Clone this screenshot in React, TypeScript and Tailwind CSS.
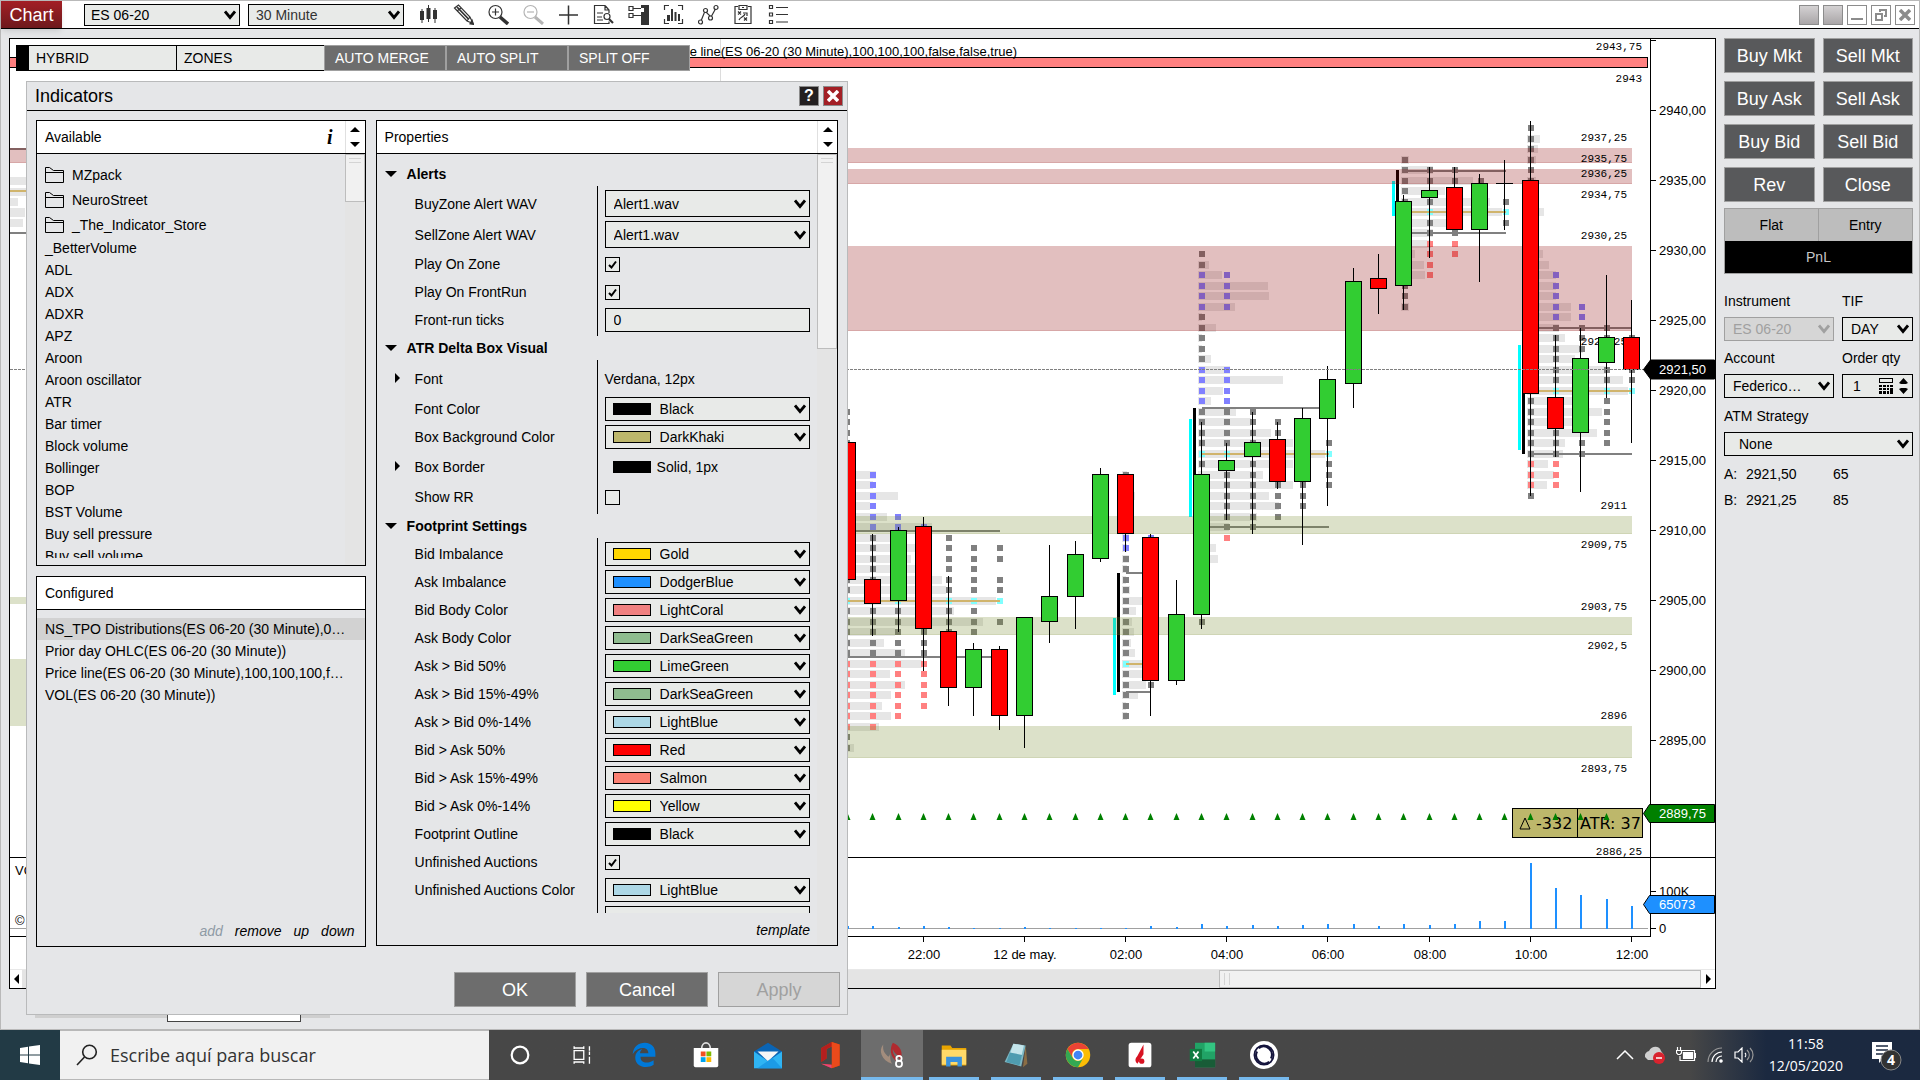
import React from "react";
import clsx from "clsx";

type Candle = { o: number; c: number; h: number; l: number; up: boolean };
type Group = {
  x: number;
  bars: number[][];
  dots: { x: number; color: string; rows: number[] }[];
  lines: { x1: number; x2: number; y: number; color: string }[];
  sides?: { cyan: number[]; black: number[] };
};

const GRAY = "#808080";
const BLUE = "#8080ff";
const RED = "#ff8080";
const CYAN = "#80ffff";
const GOLD = "#d0b46c";

const barX = (i: number) => Math.floor(923.3 + 25.29 * i);
const rowY = (r: number) => Math.floor(412 + 10.5 * r);

// y values in chart space, first candle is 20:30
const candle = (o: number, c: number, h: number, l: number, up: boolean): Candle => ({ o, c, h, l, up });
const candles: Candle[] = [
  candle(442, 580, 442, 580, false),
  candle(579, 604, 534, 636, false),
  candle(530, 601, 527, 632, true),
  candle(526, 629, 517, 671, false),
  candle(631, 688, 576, 706, false),
  candle(649, 688, 643, 716, true),
  candle(649, 716, 646, 730, false),
  candle(617, 716, 617, 748, true),
  candle(596, 622, 545, 643, true),
  candle(554, 597, 541, 629, true),
  candle(474, 559, 468, 562, true),
  candle(474, 534, 474, 552, false),
  candle(537, 681, 534, 716, false),
  candle(614, 681, 580, 685, true),
  candle(474, 615, 422, 629, true),
  candle(460, 471, 443, 520, true),
  candle(442, 457, 412, 534, true),
  candle(439, 482, 422, 489, false),
  candle(418, 482, 408, 545, true),
  candle(379, 419, 366, 506, true),
  candle(281, 384, 268, 408, true),
  candle(278, 289, 254, 314, false),
  candle(201, 286, 195, 310, true),
  candle(190, 198, 167, 258, true),
  candle(187, 230, 167, 230, false),
  candle(183, 230, 174, 282, true),
  candle(183, 184, 160, 230, true),
  candle(180, 394, 121, 496, false),
  candle(397, 429, 335, 457, false),
  candle(358, 433, 328, 492, true),
  candle(337, 363, 275, 398, true),
  candle(337, 370, 300, 443, false),
];

const groups: Group[] = [
  {
    x: 840,
    bars: [
      [6, 876], [7, 873], [8, 898], [9, 870], [10, 887], [11, 932], [12, 907], [13, 915], [14, 911], [15, 915],
      [16, 942], [17, 946], [18, 996], [19, 954], [20, 983], [21, 895], [22, 884], [23, 905], [24, 922], [25, 890],
      [26, 905], [27, 891], [28, 882], [29, 891], [30, 879], [31, 848], [32, 854],
    ],
    dots: [
      { x: 847, color: GRAY, rows: [0, 1, 2, 3, 16, 17, 19, 20, 21, 22, 23, 31, 32] },
      { x: 847, color: RED, rows: [24, 25, 26, 27, 28, 29, 30] },
      { x: 847, color: CYAN, rows: [18] },
      { x: 873, color: BLUE, rows: [6, 7, 8, 9, 10, 11] },
      { x: 873, color: GRAY, rows: [12, 13, 14, 15, 16, 19, 20, 21, 22, 23] },
      { x: 873, color: RED, rows: [24, 25, 26, 27, 28, 29, 30] },
      { x: 898, color: BLUE, rows: [10, 11] },
      { x: 898, color: CYAN, rows: [18] },
      { x: 898, color: GRAY, rows: [19, 20, 21, 22, 23] },
      { x: 898, color: RED, rows: [24, 25, 26, 27, 28, 29] },
      { x: 924, color: BLUE, rows: [11] },
      { x: 924, color: GRAY, rows: [21, 22, 23] },
      { x: 924, color: RED, rows: [24, 25, 26, 27, 28] },
      { x: 949, color: GRAY, rows: [12, 13, 14, 15, 16, 17, 19, 20, 21] },
      { x: 949, color: CYAN, rows: [18] },
      { x: 974, color: GRAY, rows: [13, 14, 15, 16, 17, 19, 20, 21] },
      { x: 974, color: CYAN, rows: [18] },
      { x: 1000, color: GRAY, rows: [13, 14, 16, 17, 20] },
      { x: 1000, color: CYAN, rows: [18] },
    ],
    lines: [
      { x1: 840, x2: 1000, y: 531, color: GRAY },
      { x1: 840, x2: 1000, y: 657, color: GRAY },
      { x1: 840, x2: 1000, y: 601, color: GOLD },
    ],
  },
  {
    x: 1122,
    bars: [
      [6, 1127], [8, 1135], [12, 1129], [13, 1127], [14, 1129], [15, 1127], [16, 1126], [17, 1130], [18, 1145],
      [19, 1136], [20, 1132], [21, 1134], [22, 1131], [23, 1135], [24, 1143], [25, 1143], [26, 1146], [27, 1138],
      [28, 1126], [29, 1127],
    ],
    dots: [
      { x: 1126, color: GRAY, rows: [6, 14, 15, 16, 17, 18, 19, 20, 21, 22, 23, 25, 26, 27, 28, 29] },
      { x: 1126, color: BLUE, rows: [12, 13] },
      { x: 1126, color: CYAN, rows: [24] },
      { x: 1151, color: BLUE, rows: [12] },
      { x: 1151, color: GRAY, rows: [26] },
    ],
    lines: [
      { x1: 1126, x2: 1151, y: 573, color: GRAY },
      { x1: 1126, x2: 1151, y: 692, color: GRAY },
      { x1: 1126, x2: 1151, y: 664, color: GOLD },
    ],
    sides: { cyan: [1113, 618, 695], black: [1117, 573, 692] },
  },
  {
    x: 1198,
    bars: [
      [-14, 1209], [-13, 1222], [-12, 1268], [-11, 1269], [-10, 1235], [-9, 1202], [-8, 1216], [-7, 1202],
      [-6, 1202], [-5, 1211], [-4, 1230], [-3, 1283], [-2, 1223], [-1, 1211], [0, 1236], [1, 1251], [2, 1271],
      [3, 1293], [4, 1325], [5, 1293], [6, 1263], [7, 1293], [8, 1269], [9, 1279], [10, 1257], [11, 1229],
      [13, 1216], [14, 1218],
    ],
    dots: [
      { x: 1202, color: GRAY, rows: [-15, -14, -9, -8, -7, -6, -5, 0, 1, 2, 3, 5, 20] },
      { x: 1202, color: BLUE, rows: [-13, -12, -11, -10, -4, -3, -2, -1] },
      { x: 1202, color: CYAN, rows: [4] },
      { x: 1227, color: BLUE, rows: [-13, -12, -11, -10, -4, -3, -2, -1] },
      { x: 1227, color: GRAY, rows: [0, 1, 2, 3, 6, 7, 8, 9, 10, 11] },
      { x: 1227, color: CYAN, rows: [4] },
      { x: 1227, color: RED, rows: [12] },
      { x: 1253, color: GRAY, rows: [0, 1, 2, 3, 5, 6, 7, 8, 9, 10, 11] },
      { x: 1278, color: GRAY, rows: [1, 2, 7, 8, 9, 10] },
      { x: 1303, color: GRAY, rows: [7, 8, 9] },
      { x: 1329, color: GRAY, rows: [3, 5, 6, 7] },
      { x: 1329, color: CYAN, rows: [4] },
    ],
    lines: [
      { x1: 1202, x2: 1329, y: 408, color: GRAY },
      { x1: 1202, x2: 1329, y: 527, color: GRAY },
      { x1: 1202, x2: 1329, y: 454, color: GOLD },
    ],
    sides: { cyan: [1189, 419, 517], black: [1193, 408, 527] },
  },
  {
    x: 1401,
    bars: [
      [-24, 1409], [-23, 1433], [-22, 1473], [-21, 1445], [-20, 1490], [-19, 1502], [-18, 1448], [-17, 1433],
      [-16, 1431], [-15, 1415], [-14, 1424], [-13, 1425], [-10, 1409],
    ],
    dots: [
      { x: 1405, color: GRAY, rows: [-24, -23, -22, -21, -20, -12, -11, -10] },
      { x: 1430, color: GRAY, rows: [-23, -22, -20, -18, -17] },
      { x: 1430, color: CYAN, rows: [-19] },
      { x: 1430, color: RED, rows: [-16, -15, -14, -13] },
      { x: 1455, color: GRAY, rows: [-23, -22, -17] },
      { x: 1455, color: RED, rows: [-16, -15] },
      { x: 1481, color: GRAY, rows: [-22] },
      { x: 1506, color: GRAY, rows: [-20, -18] },
      { x: 1506, color: CYAN, rows: [-19] },
    ],
    lines: [
      { x1: 1405, x2: 1506, y: 171, color: GRAY },
      { x1: 1405, x2: 1506, y: 233, color: GRAY },
      { x1: 1405, x2: 1506, y: 212, color: GOLD },
    ],
    sides: { cyan: [1392, 181, 216], black: [1396, 170, 233] },
  },
  {
    x: 1527,
    bars: [
      [-26, 1540], [-25, 1538], [-24, 1536], [-22, 1536], [-19, 1544], [-15, 1543], [-14, 1549], [-13, 1556],
      [-12, 1556], [-11, 1556], [-10, 1571], [-9, 1571], [-8, 1559], [-7, 1565], [-6, 1583], [-5, 1575],
      [-4, 1607], [-3, 1623], [-2, 1628], [-1, 1576], [0, 1602], [1, 1581], [2, 1597], [3, 1565], [4, 1563],
      [5, 1548], [6, 1554], [7, 1547],
    ],
    dots: [
      { x: 1531, color: GRAY, rows: [-27, -26, -25, -24, -23, -22, -1, 0, 1, 2, 3, 4, 8] },
      { x: 1531, color: RED, rows: [5, 6, 7] },
      { x: 1556, color: BLUE, rows: [-13, -12, -11, -10, -9] },
      { x: 1556, color: GRAY, rows: [-8, -7, -6, -5, -4, -3, 2, 3, 4] },
      { x: 1556, color: CYAN, rows: [-2] },
      { x: 1556, color: RED, rows: [5, 6, 7] },
      { x: 1582, color: BLUE, rows: [-10, -9] },
      { x: 1582, color: GRAY, rows: [-8, -7, -6, 3, 4] },
      { x: 1607, color: GRAY, rows: [-8, -7, -4, -3, -1, 0, 1, 2, 3] },
      { x: 1607, color: CYAN, rows: [-2] },
      { x: 1632, color: GRAY, rows: [-7, -4, -3] },
      { x: 1632, color: CYAN, rows: [-2] },
    ],
    lines: [
      { x1: 1531, x2: 1632, y: 328, color: GRAY },
      { x1: 1531, x2: 1632, y: 454, color: GRAY },
      { x1: 1531, x2: 1632, y: 391, color: GOLD },
    ],
    sides: { cyan: [1518, 345, 450], black: [1522, 394, 454] },
  },
];

const zones = [
  { x: 10, y: 148, h: 15, color: "#8b0000" },
  { x: 720, y: 169, h: 15, color: "#8b0000" },
  { x: 720, y: 246, h: 85, color: "#8b0000" },
  { x: 720, y: 516, h: 18, color: "#738727" },
  { x: 720, y: 617, h: 18, color: "#738727" },
  { x: 720, y: 726, h: 32, color: "#738727" },
];

const zoneLabels: [string, number, number][] = [
  ["2943,75", 1642, 46],
  ["2943", 1642, 78],
  ["2937,25", 1627, 137],
  ["2935,75", 1627, 158],
  ["2936,25", 1627, 173],
  ["2934,75", 1627, 194],
  ["2930,25", 1627, 235],
  ["2924,25", 1627, 341],
  ["2911", 1627, 505],
  ["2909,75", 1627, 544],
  ["2903,75", 1627, 606],
  ["2902,5", 1627, 645],
  ["2896", 1627, 715],
  ["2893,75", 1627, 768],
  ["2886,25", 1642, 851],
];

const volumes = [
  3, 3, 2, 3, 2, 1, 1, 2, 1, 1, 1, 1, 3, 2, 5, 3, 4, 3, 4, 5, 5, 3, 5, 4, 5, 8, 8, 66, 41, 34, 30, 23,
];

const prices = [2940, 2935, 2930, 2925, 2920, 2915, 2910, 2905, 2900, 2895];
const times = ["22:00", "12 de may.", "02:00", "04:00", "06:00", "08:00", "10:00", "12:00"];

const PriceChart = () => (
  <svg
    viewBox="10 39 1705 930"
    preserveAspectRatio="xMaxYMin slice"
    className="block h-[930px] w-full bg-white"
    fontFamily="Liberation Sans, Arial, sans-serif"
    fontSize="13"
    shapeRendering="crispEdges"
  >
    {/* older session, left of the dialog */}
    <g fill="#e6e6e6">
      <rect x="10" y="177" width="20" height="8" />
      <rect x="10" y="188" width="20" height="8" />
      <rect x="10" y="198" width="8" height="8" />
      <rect x="10" y="208" width="15" height="9" />
      <rect x="10" y="219" width="13" height="8" />
    </g>
    <rect x="10" y="190" width="20" height="2" fill={GOLD} />
    <rect x="10" y="148" width="20" height="2" fill={GRAY} />
    <rect x="10" y="232" width="20" height="2" fill={GRAY} />
    <rect x="720" y="39" width="1" height="60" fill="#dcdcdc" />
    {/* volume profiles */}
    {groups.map((g) => (
      <g key={g.x}>
        {g.bars.map(([r, end]) => (
          <rect key={r} x={g.x} y={rowY(r) - 4} width={end - g.x} height="8" fill="#e6e6e6" />
        ))}
        {g.dots.map((d) =>
          d.rows.map((r) => (
            <rect key={`${d.x}-${r}`} x={d.x - 3} y={rowY(r) - 3} width="6" height="6" fill={d.color} />
          ))
        )}
        {g.lines.map((l) => (
          <rect key={l.y} x={l.x1} y={l.y - 1} width={l.x2 - l.x1} height="2" fill={l.color} />
        ))}
        {g.sides && (
          <>
            <rect x={g.sides.cyan[0]} y={g.sides.cyan[1]} width="3" height={g.sides.cyan[2] - g.sides.cyan[1]} fill="#00ffff" />
            <rect x={g.sides.black[0]} y={g.sides.black[1]} width="3" height={g.sides.black[2] - g.sides.black[1]} fill="#000" />
          </>
        )}
      </g>
    ))}
    {/* supply and demand zones */}
    {zones.map((z) => (
      <g key={z.y} fill={z.color}>
        <rect x={z.x} y={z.y} width={1632 - z.x} height={z.h} fillOpacity="0.25" />
        <rect x={z.x} y={z.y + z.h - 1} width={1632 - z.x} height="1" fillOpacity="0.12" />
      </g>
    ))}
    <rect x="10" y="597" width="20" height="7" fill="#738727" fillOpacity="0.25" />
    <rect x="10" y="659" width="20" height="67" fill="#738727" fillOpacity="0.25" />
    <g fontFamily="Liberation Mono, Courier New, monospace" fontSize="11" textAnchor="end">
      {zoneLabels.map(([text, x, y]) => (
        <text key={text} x={x} y={y + 4}>
          {text}
        </text>
      ))}
    </g>
    {/* price line indicator */}
    <rect x="9.5" y="57.5" width="1638" height="10" fill="#ff8080" stroke="#000" />
    <text x="1017" y="56" textAnchor="end">
      Price line(ES 06-20 (30 Minute),100,100,100,false,false,true)
    </text>
    {/* candles */}
    {candles.map((c, i) => {
      const x = barX(i - 3);
      return (
        <g key={i}>
          <rect x={x} y={c.h} width="1" height={c.l - c.h} fill="#000" />
          {c.c - c.o < 2 ? (
            <rect x={x - 8} y={c.o} width="17" height="1" fill="#000" />
          ) : (
            <rect
              x={x - 7.5}
              y={c.o + 0.5}
              width="16"
              height={c.c - c.o - 1}
              fill={c.up ? "#32cd32" : "#ff0000"}
              stroke="#000"
            />
          )}
        </g>
      );
    })}
    <line x1="10" x2="1644" y1="369.5" y2="369.5" stroke="#808080" strokeDasharray="3 1" />
    {/* delta / ATR box */}
    <rect x="1512.5" y="808.5" width="65" height="29" fill="#bdb76b" stroke="#000" />
    <rect x="1577.5" y="808.5" width="65" height="29" fill="#bdb76b" stroke="#000" />
    <path d="M1520 829l5-11 5 11z" fill="none" stroke="#000" shapeRendering="auto" />
    <g fontFamily="DejaVu Sans, Verdana, sans-serif" fontSize="16">
      <text x="1536" y="829">-332</text>
      <text x="1580" y="829">ATR: 37</text>
    </g>
    {candles.slice(0, 31).map((_, i) => (
      <path key={i} d={`M${barX(i - 3) + 0.5} 813l3 7h-6z`} fill="#008000" shapeRendering="auto" />
    ))}
    {/* volume panel */}
    <rect x="10" y="857" width="1705" height="1" />
    <rect x="10" y="928" width="1638" height="1" fill="#a0a0a0" />
    {volumes.map((v, i) => (
      <rect key={i} x={barX(i - 3)} y={929 - v} width="2" height={v} fill="#1e90ff" />
    ))}
    <text x="15" y="875">VOL(ES 06-20 (30 Minute))</text>
    <text x="15" y="925">© 2020 NinjaTrader, LLC</text>
    {/* axes */}
    <rect x="10" y="936" width="1641" height="1" />
    <rect x="1650" y="39" width="1" height="898" />
    <rect x="1651" y="40" width="5" height="1" />
    {prices.map((p) => {
      const y = Math.round(110 + (2940 - p) * 14.01);
      return (
        <g key={p}>
          <rect x="1651" y={y} width="5" height="1" />
          <text x="1659" y={y + 5}>{`${p},00`}</text>
        </g>
      );
    })}
    <rect x="1651" y="891" width="5" height="1" />
    <text x="1659" y="896">100K</text>
    <rect x="1651" y="928" width="5" height="1" />
    <text x="1659" y="933">0</text>
    {times.map((t, i) => (
      <g key={t}>
        <rect x={barX(i * 4)} y="937" width="1" height="5" />
        <text x={barX(i * 4) + 1} y="959" textAnchor="middle">
          {t}
        </text>
      </g>
    ))}
    <g stroke="#000" shapeRendering="auto">
      <path d="M1643.5 369.5l7-9.5h64v19h-64z" fill="#000" />
      <path d="M1643.5 813.5l6-9h65v18h-65z" fill="#008000" />
      <path d="M1643.5 904.5l6-9h65v18h-65z" fill="#1e90ff" />
    </g>
    <g fill="#fff">
      <text x="1659" y="374">2921,50</text>
      <text x="1659" y="818">2889,75</text>
      <text x="1659" y="909">65073</text>
    </g>
  </svg>
);

/* ---------- form pieces ---------- */

const Chevron = ({ className = "" }: { className?: string }) => (
  <svg
    viewBox="0 0 12 10"
    className={clsx("pointer-events-none absolute top-1/2 h-[10px] w-3 -translate-y-1/2", className)}
    fill="none"
    stroke="currentColor"
    strokeWidth="2.8"
  >
    <path d="M1 1.5l5 6 5-6" />
  </svg>
);

type SelectProps = {
  id?: string;
  label?: string;
  value: string;
  swatch?: string;
  disabled?: boolean;
  className?: string;
  selectClass?: string;
};

const Select = ({ id, label, value, swatch, disabled, className, selectClass = "pl-2" }: SelectProps) => (
  <div className={clsx("relative", className, disabled ? "text-[#a0a0a0]" : "text-black")}>
    <select
      id={id}
      aria-label={label}
      disabled={disabled}
      className={clsx(
        "block h-full w-full appearance-none border pr-5 text-sm",
        disabled ? "border-[#a0a0a0] bg-[#d6d6d6]" : "border-black bg-[#e8eae8]",
        swatch ? "pl-[54px]" : selectClass
      )}
    >
      <option>{value}</option>
    </select>
    {swatch && (
      <span className={clsx("pointer-events-none absolute top-1.5 left-2 h-3 w-[38px] border border-black", swatch)} />
    )}
    <Chevron className="right-1" />
  </div>
);

const Checkbox = ({ id, checked }: { id: string; checked?: boolean }) => (
  <span className="relative flex h-[15px] w-[15px]">
    <input
      id={id}
      type="checkbox"
      defaultChecked={checked}
      className="peer h-[15px] w-[15px] appearance-none border border-black bg-[#e8eae8]"
    />
    <svg
      viewBox="0 0 15 15"
      className="pointer-events-none absolute inset-0 hidden peer-checked:block"
      fill="none"
      stroke="#000"
      strokeWidth="2"
    >
      <path d="M4 8l2.500 2.500L11 4.500" />
    </svg>
  </span>
);

const SortArrows = () => (
  <span className="flex w-5 flex-col items-center justify-between border-l border-[#e0e0e0] py-1.5">
    <svg viewBox="0 0 10 5" className="h-[5px] w-[10px]">
      <path d="M0 5l5-5 5 5z" />
    </svg>
    <svg viewBox="0 0 10 5" className="h-[5px] w-[10px]">
      <path d="M0 0l5 5 5-5z" />
    </svg>
  </span>
);

const FolderIcon = () => (
  <svg viewBox="0 0 19 16" className="h-4 w-[19px]" fill="none" stroke="#000">
    <path d="M.5 15.500V.5h4l4 3h10v12zM.5 5.500h18" />
  </svg>
);

type Row = {
  label: string;
  kind: "select" | "color" | "check" | "input" | "text" | "border";
  value?: string;
  swatch?: string;
  checked?: boolean;
  h?: string;
};

const alertRows: Row[] = [
  { label: "BuyZone Alert WAV", kind: "select", value: "Alert1.wav", h: "h-[31px]" },
  { label: "SellZone Alert WAV", kind: "select", value: "Alert1.wav", h: "h-[31px]" },
  { label: "Play On Zone", kind: "check", checked: true },
  { label: "Play On FrontRun", kind: "check", checked: true },
  { label: "Front-run ticks", kind: "input", value: "0" },
];

const boxRows: Row[] = [
  { label: "Font", kind: "text", value: "Verdana, 12px", h: "h-8" },
  { label: "Font Color", kind: "color", value: "Black", swatch: "bg-black" },
  { label: "Box Background Color", kind: "color", value: "DarkKhaki", swatch: "bg-[#bdb76b]" },
  { label: "Box Border", kind: "border", value: "Solid, 1px", h: "h-8" },
  { label: "Show RR", kind: "check" },
];

const footprintRows: Row[] = [
  { label: "Bid Imbalance", kind: "color", value: "Gold", swatch: "bg-[#ffd700]" },
  { label: "Ask Imbalance", kind: "color", value: "DodgerBlue", swatch: "bg-[#1e90ff]" },
  { label: "Bid Body Color", kind: "color", value: "LightCoral", swatch: "bg-[#f08080]" },
  { label: "Ask Body Color", kind: "color", value: "DarkSeaGreen", swatch: "bg-[#8fbc8f]" },
  { label: "Ask > Bid 50%", kind: "color", value: "LimeGreen", swatch: "bg-[#32cd32]" },
  { label: "Ask > Bid 15%-49%", kind: "color", value: "DarkSeaGreen", swatch: "bg-[#8fbc8f]" },
  { label: "Ask > Bid 0%-14%", kind: "color", value: "LightBlue", swatch: "bg-[#add8e6]" },
  { label: "Bid > Ask 50%", kind: "color", value: "Red", swatch: "bg-[#ff0000]" },
  { label: "Bid > Ask 15%-49%", kind: "color", value: "Salmon", swatch: "bg-[#fa8072]" },
  { label: "Bid > Ask 0%-14%", kind: "color", value: "Yellow", swatch: "bg-[#ffff00]" },
  { label: "Footprint Outline", kind: "color", value: "Black", swatch: "bg-black" },
  { label: "Unfinished Auctions", kind: "check", checked: true },
  { label: "Unfinished Auctions Color", kind: "color", value: "LightBlue", swatch: "bg-[#add8e6]" },
  { label: "", kind: "input", value: "" },
];

const PropertyRow = ({ row, id }: { row: Row; id: string }) => {
  const expandable = row.kind === "text" || row.kind === "border";
  return (
    <div className={clsx("flex items-center", row.h ?? "h-7")}>
      <div className="relative w-[220px] pl-[38px]">
        {expandable && (
          <svg viewBox="0 0 5 10" className="absolute top-1 left-[18px] h-[10px] w-[5px]">
            <path d="M0 0l5 5-5 5z" />
          </svg>
        )}
        {expandable ? <span>{row.label}</span> : <label htmlFor={id}>{row.label}</label>}
      </div>
      <div className="ml-2 flex w-[205px] items-center">
        {row.kind === "select" && <Select id={id} value={row.value!} className="h-[27px] w-full" />}
        {row.kind === "color" && <Select id={id} value={row.value!} swatch={row.swatch} className="h-6 w-full" />}
        {row.kind === "check" && <Checkbox id={id} checked={row.checked} />}
        {row.kind === "input" && (
          <input
            id={id}
            type="text"
            defaultValue={row.value}
            className="h-6 w-full border border-black bg-[#e8eae8] px-2 text-sm"
          />
        )}
        {row.kind === "text" && <span>{row.value}</span>}
        {row.kind === "border" && (
          <>
            <span className="ml-2 h-3 w-[38px] bg-black" />
            <span className="ml-1.5">{row.value}</span>
          </>
        )}
      </div>
    </div>
  );
};

const Section = ({ title, rows, className, first }: { title: string; rows: Row[]; className?: string; first?: boolean }) => (
  <>
    <div className={clsx("flex shrink-0 items-center", first ? "h-8 pt-2" : "h-6")}>
      <svg viewBox="0 0 12 6" className="ml-2 h-1.5 w-3">
        <path d="M0 0l6 6 6-6z" />
      </svg>
      <h3 className="ml-2.5 font-bold">{title}</h3>
    </div>
    <div className={clsx("relative shrink-0", className)}>
      <span className="absolute inset-y-0 left-[220px] w-px bg-black" />
      {rows.map((row, i) => (
        <PropertyRow key={i} row={row} id={`${title}-${i}`.replace(/ /g, "-")} />
      ))}
    </div>
  </>
);

/* ---------- dialog ---------- */

const folders = ["MZpack", "NeuroStreet", "_The_Indicator_Store"];
const available = [
  "_BetterVolume",
  "ADL",
  "ADX",
  "ADXR",
  "APZ",
  "Aroon",
  "Aroon oscillator",
  "ATR",
  "Bar timer",
  "Block volume",
  "Bollinger",
  "BOP",
  "BST Volume",
  "Buy sell pressure",
  "Buy sell volume",
];
const configured = [
  "NS_TPO Distributions(ES 06-20 (30 Minute),0…",
  "Prior day OHLC(ES 06-20 (30 Minute))",
  "Price line(ES 06-20 (30 Minute),100,100,100,f…",
  "VOL(ES 06-20 (30 Minute))",
];

const ScrollBar = ({ thumb }: { thumb: string }) => (
  <div className="w-5 shrink-0 bg-[#e4e4e4]">
    <div className={clsx("flex flex-col gap-[3px] border border-[#bdbdbd] bg-[#f1f1f1] px-[3px] pt-[3px]", thumb)}>
      <span className="h-px bg-[#d4d4d4]" />
      <span className="h-px bg-[#d4d4d4]" />
    </div>
  </div>
);

const IndicatorsDialog = () => (
  <section
    role="dialog"
    aria-label="Indicators"
    className="absolute top-[81px] left-[25px] z-10 w-[822px] border border-[#b9babb] bg-[#e5e6e8] text-sm text-black"
  >
    <header className="flex h-[29px] items-center border-b border-black pr-1 pl-2">
      <h2 className="flex-1 text-lg">Indicators</h2>
      <button className="h-5 w-5 border border-[#8c8c8c] bg-[#231f20] text-base leading-4 font-bold text-white">?</button>
      <button aria-label="Close dialog" className="ml-1 flex h-5 w-5 items-center justify-center border border-[#8c8c8c] bg-[#a31f25]">
        <svg viewBox="0 0 12 12" className="h-3 w-3" stroke="#fff" strokeWidth="3.500">
          <path d="M1 1l10 10M11 1L1 11" />
        </svg>
      </button>
    </header>
    <div className="flex gap-[10px] px-[9px] pt-[9px]">
      <div className="flex w-[330px] flex-col gap-[10px]">
        <div className="h-[446px] border border-black">
          <div className="flex h-[33px] border-b border-black bg-white">
            <h3 className="flex-1 self-center pl-2">Available</h3>
            <button aria-label="Info" className="pr-3 font-['Liberation_Serif',serif] text-xl leading-7 font-bold italic">
              i
            </button>
            <SortArrows />
          </div>
          <div className="flex h-[411px]">
            <ul className="h-[404px] flex-1 overflow-hidden pt-2 pl-2">
              {folders.map((name) => (
                <li key={name} className="flex h-[25px] items-center gap-2">
                  <FolderIcon />
                  {name}
                </li>
              ))}
              {available.map((name) => (
                <li key={name} className="h-[22px] leading-[22px]">
                  {name}
                </li>
              ))}
            </ul>
            <ScrollBar thumb="h-12" />
          </div>
        </div>
        <div className="flex h-[371px] flex-col border border-black">
          <h3 className="flex h-[33px] items-center border-b border-black bg-white pl-2">Configured</h3>
          <ul className="flex-1 pt-2">
            {configured.map((name, i) => (
              <li key={name} className={clsx("h-[22px] px-2 leading-[22px] whitespace-nowrap", i === 0 && "bg-[#d2d2d2]")}>
                {name}
              </li>
            ))}
          </ul>
          <div className="flex h-[30px] items-center justify-end gap-3 pr-[10px] italic">
            <button className="text-[#8e9aa5]" disabled>
              add
            </button>
            <button>remove</button>
            <button>up</button>
            <button>down</button>
          </div>
        </div>
      </div>
      <div className="flex h-[826px] w-[463px] flex-col border border-black">
        <div className="flex h-[33px] shrink-0 border-b border-black bg-white">
          <h3 className="flex-1 self-center pl-2">Properties</h3>
          <SortArrows />
        </div>
        <div className="flex min-h-0 flex-1">
          <div className="flex flex-1 flex-col">
            <div className="flex h-[759px] flex-col overflow-hidden">
              <Section title="Alerts" rows={alertRows} className="py-0.5" first />
              <Section title="ATR Delta Box Visual" rows={boxRows} className="py-[3px]" />
              <Section title="Footprint Settings" rows={footprintRows} className="py-0.5" />
            </div>
            <button className="mt-[7px] mr-[7px] self-end italic">template</button>
          </div>
          <ScrollBar thumb="h-[195px]" />
        </div>
      </div>
    </div>
    <footer className="flex justify-end gap-[10px] px-[7px] pt-[25px] pb-[7px]">
      <button className="h-[35px] w-[122px] border border-[#a0a0a0] bg-[#6d6d6d] text-lg text-white">OK</button>
      <button className="h-[35px] w-[122px] border border-[#a0a0a0] bg-[#6d6d6d] text-lg text-white">Cancel</button>
      <button disabled className="h-[35px] w-[122px] border border-[#a0a0a0] bg-[#d6d6d6] text-lg text-[#a0a0a0]">
        Apply
      </button>
    </footer>
  </section>
);

/* ---------- toolbar ---------- */

const tools: { name: string; icon: React.ReactNode }[] = [
  {
    name: "Chart style",
    icon: (
      <path d="M2 7h4v9H2zM8.500 4h4v11h-4zM15 6h4v9h-4zM3.500 5h1v14h-1zM10 1h1v17h-1zM16.500 4h1v15h-1z" fill="#333" stroke="none" />
    ),
  },
  {
    name: "Drawing tools",
    icon: (
      <>
        <path d="M1.500 4l4-3L17 13l3 6.500-6-2.500zM14 17l3-4M4 7l4-3" />
        <path d="M4 3l11.500 12M17.500 19.500l2.500.500-1-3z" strokeWidth="1.800" />
      </>
    ),
  },
  {
    name: "Zoom in",
    icon: (
      <>
        <circle cx="7.500" cy="8" r="6.500" />
        <path d="M7.500 4.500v7M4 8h7" />
        <path d="M12 13l8 7" strokeWidth="3.500" />
      </>
    ),
  },
  {
    name: "Zoom out",
    icon: (
      <g stroke="#b4b4b4">
        <circle cx="7.500" cy="8" r="6.500" />
        <path d="M4 8h7" />
        <path d="M12 13l8 7" strokeWidth="3" />
      </g>
    ),
  },
  { name: "Crosshair", icon: <path d="M10.500 1.500v19M1 11h19" strokeWidth="1.500" /> },
  {
    name: "Data box",
    icon: (
      <>
        <path d="M12 1.500H1.500v18H16v-2M12 1.500L16 6v3M12 1.500V6h4M4 9h6M4 13h5M4 16h6" />
        <circle cx="14" cy="12.500" r="3" />
        <path d="M16 15l4 4" strokeWidth="2.200" />
      </>
    ),
  },
  {
    name: "Chart trader",
    icon: (
      <>
        <path d="M1 2.500h4v4H1zM1 9.500h4v4H1zM5 4.500h8M5 11.500h8" />
        <path d="M13 1h8v20h-8V8h3V4h-3z" fill="#333" stroke="none" />
      </>
    ),
  },
  {
    name: "Data series",
    icon: (
      <>
        <path d="M6 1.500H1.500V6M15 1.500h4.500V6M6 19.500H1.500V15M15 19.500h4.500V15" />
        <path d="M4 11h3v6H4zM8 5h2v12H8zM11.500 8h2v9h-2zM15 10h2v7h-2z" fill="#333" stroke="none" />
      </>
    ),
  },
  {
    name: "Indicators",
    icon: (
      <>
        <path d="M3 17L7 7l6 6 5-9" />
        <g fill="#fff">
          <circle cx="2.500" cy="18" r="2" />
          <circle cx="7.500" cy="6.500" r="2" />
          <circle cx="12.500" cy="14" r="2" />
          <circle cx="18" cy="3.500" r="2" />
        </g>
      </>
    ),
  },
  {
    name: "Strategies",
    icon: (
      <>
        <path d="M5 2.500H2v17h16v-17h-3M6 1.500h8v4H6zM9 3.500h2" />
        <path d="M5 7.500l3 3M8 7.500l-3 3M11 13.500l3 3M14 13.500l-3 3M6 16c1-3 5-3 6-6M10 9h4v3" />
      </>
    ),
  },
  {
    name: "Properties",
    icon: <path d="M1.500 1.500h3v3h-3zM1.500 9h3v3h-3zM1.500 16.500h3v3h-3zM8 3.500h12M8 10.500h12M8 18h12" />,
  },
];

const TitleBar = () => (
  <header className="flex h-[29px] items-center border-t border-b border-t-[#b9b9b9] border-b-black bg-white">
    <h1 className="flex h-full w-[61px] items-center justify-center bg-linear-to-b from-[#a31f25] to-[#6e191c] text-lg text-white shadow-md">
      Chart
    </h1>
    <Select label="Instrument selector" value="ES 06-20" className="ml-[22px] h-[22px] w-[156px]" selectClass="pl-1.5" />
    <Select label="Interval" value="30 Minute" className="ml-2 h-[22px] w-[156px] [&>select]:text-[#333]" selectClass="pl-[7px]" />
    <div className="ml-[7px] flex flex-1">
      {tools.map((t) => (
        <button key={t.name} aria-label={t.name} className="flex h-6 w-[35px] items-center justify-center">
          <svg viewBox="0 0 21 21" className="h-[21px] w-[21px]" fill="none" stroke="#333" strokeWidth="1.200">
            {t.icon}
          </svg>
        </button>
      ))}
    </div>
    <div className="flex gap-1 pr-1">
      <button aria-label="Link instrument" className="h-5 w-5 border border-[#8c8c8c] bg-linear-to-b from-[#d4d2d3] to-[#aaa6a8]" />
      <button aria-label="Link interval" className="h-5 w-5 border border-[#8c8c8c] bg-linear-to-b from-[#d4d2d3] to-[#aaa6a8]" />
      <button aria-label="Minimize" className="flex h-5 w-5 items-end justify-center border border-[#8c8c8c] pb-1">
        <span className="h-0.5 w-3 bg-[#8c8c8c]" />
      </button>
      <button aria-label="Restore" className="flex h-5 w-5 items-center justify-center border border-[#8c8c8c]">
        <svg viewBox="0 0 12 12" className="h-3 w-3" fill="none" stroke="#8c8c8c" strokeWidth="2">
          <path d="M5 3V1h6v6H9M1 5h6v6H1z" />
        </svg>
      </button>
      <button aria-label="Close" className="flex h-5 w-5 items-center justify-center border border-[#8c8c8c]">
        <svg viewBox="0 0 12 12" className="h-3 w-3" stroke="#8c8c8c" strokeWidth="3.500">
          <path d="M1 1l10 10M11 1L1 11" />
        </svg>
      </button>
    </div>
  </header>
);

/* ---------- order entry ---------- */

const orderButtons = ["Buy Mkt", "Sell Mkt", "Buy Ask", "Sell Ask", "Buy Bid", "Sell Bid", "Rev", "Close"];

const OrderPanel = () => (
  <aside className="w-[189px] shrink-0 text-sm text-black">
    <div className="grid grid-cols-2 gap-2">
      {orderButtons.map((b) => (
        <button key={b} className="h-[35px] border border-[#a0a0a0] bg-[#58595b] text-lg text-white">
          {b}
        </button>
      ))}
    </div>
    <div className="mt-[6px] grid grid-cols-2 border border-[#a0a0a0] bg-[#bdbdbd] text-center leading-8">
      <span className="border-r border-[#a0a0a0]">Flat</span>
      <span>Entry</span>
      <span className="col-span-2 bg-black text-[#c8c8c8]">PnL</span>
    </div>
    <div className="mt-[17px] grid grid-cols-[110px_1fr] gap-x-2">
      <label htmlFor="instrument" className="h-[26px] leading-5">
        Instrument
      </label>
      <label htmlFor="tif" className="leading-5">
        TIF
      </label>
      <Select id="instrument" value="ES 06-20" disabled className="h-6" />
      <Select id="tif" value="DAY" className="h-6" />
      <label htmlFor="account" className="mt-[7px] h-[26px] leading-5">
        Account
      </label>
      <label htmlFor="qty" className="mt-[7px] leading-5">
        Order qty
      </label>
      <Select id="account" value="Federico…" className="h-6" />
      <div className="flex h-6 items-center border border-black bg-[#e8eae8] pr-1 pl-2.5">
        <input id="qty" type="text" defaultValue="1" className="w-[26px] bg-transparent text-sm" />
        <svg viewBox="0 0 14 16" className="h-4 w-3.5">
          <path d="M0 0h14v5H0zM1 1v3h12V1z" fillRule="evenodd" />
          <path d="M0 7h3v2H0zM4 7h3v2H4zM8 7h2v2H8zM11 7h3v2h-3zM0 10h3v2H0zM4 10h3v2H4zM8 10h2v2H8zM11 10h3v6h-3zM0 13h3v3H0zM4 13h3v3H4zM8 13h2v3H8z" />
        </svg>
        <svg viewBox="0 0 9 16" className="ml-1.5 h-4 w-[9px]">
          <path d="M0 5l4.500-5L9 5l-2 1H2zM0 11l4.500 5L9 11l-2-1H2z" />
        </svg>
      </div>
    </div>
    <label htmlFor="atm" className="mt-2 mb-[6px] block leading-5">
      ATM Strategy
    </label>
    <Select id="atm" value="None" className="h-6" selectClass="pl-[14px]" />
    <dl className="mt-[5px] grid grid-cols-[22px_87px_1fr] leading-[26px]">
      <dt>A:</dt>
      <dd>2921,50</dd>
      <dd>65</dd>
      <dt>B:</dt>
      <dd>2921,25</dd>
      <dd>85</dd>
    </dl>
  </aside>
);

/* ---------- taskbar ---------- */

const apps: { name: string; open?: boolean; active?: boolean; icon: React.ReactNode }[] = [
  { name: "Cortana", icon: <circle cx="16" cy="16" r="9.500" fill="none" stroke="#fff" strokeWidth="2.500" /> },
  {
    name: "Task view",
    icon: (
      <path d="M7 11h11v10H7zM7 9V6M18 9V6M7 8h11M7 26v-3M18 26v-3M7 24h11M24.500 6v5M24.500 18v8M24.500 12v4" fill="none" stroke="#fff" strokeWidth="1.500" />
    ),
  },
  {
    name: "Edge",
    icon: (
      <path
        d="M3 15C4 6 10 2 17 2c8 0 12 6 12 12v4H12c0 8 9 8 15 4v5c-7 5-21 3-21-8 0-6 4-9 8-10-2 2-2.500 3-2.500 5H21c0-8-12-8-18 1z"
        fill="#0078d7"
      />
    ),
  },
  {
    name: "Store",
    icon: (
      <>
        <path d="M11 9c0-9 10-9 10 0" fill="none" stroke="#ddd" strokeWidth="2" />
        <path d="M2 8h28v20a2 2 0 01-2 2H4a2 2 0 01-2-2z" fill="#fff" />
        <path d="M10 12h5.500v5.500H10z" fill="#f25022" />
        <path d="M16.500 12H22v5.500h-5.500z" fill="#7fba00" />
        <path d="M10 18.500h5.500V24H10z" fill="#00a4ef" />
        <path d="M16.500 18.500H22V24h-5.500z" fill="#ffb900" />
      </>
    ),
  },
  {
    name: "Mail",
    icon: (
      <>
        <path d="M0 12L16 2l16 10v19H0z" fill="#0a64b4" />
        <path d="M0 12l16 11 16-11v19H0z" fill="#2fb4f3" />
        <path d="M4 12h24L16 23z" fill="#f6f6f6" />
        <path d="M32 31H4l17-12z" fill="#1c9be6" />
      </>
    ),
  },
  {
    name: "Office",
    icon: (
      <>
        <path d="M6 8L18 1l9 3v24l-9 3L6 26l13 1V6l-7 3v11l-6 4z" fill="#d83b01" />
        <path d="M6 8L18 1v5l-6 3v11l-6 4z" fill="#b31f1f" />
        <path d="M6 26l12 1v4z" fill="#e8467c" />
        <path d="M18 1l9 3v24l-9 3z" fill="#eb4a1b" />
      </>
    ),
  },
  {
    name: "NinjaTrader",
    open: true,
    active: true,
    icon: (
      <>
        <path d="M6 4C0 11 4 22 16 26 12 20 16 12 12 8c3 4 2 8 0 10C8 15 5 11 6 4z" fill="#a38d7d" />
        <path d="M17 2c8 3 13 12 8 20C24 16 18 14 17 9c-1 6 4 8 4 14-7-5-8-14-4-21z" fill="#b02a2f" />
        <circle cx="24" cy="20" r="3" fill="none" stroke="#fff" strokeWidth="2" />
        <circle cx="24" cy="26" r="3.500" fill="none" stroke="#fff" strokeWidth="2" />
      </>
    ),
  },
  {
    name: "Explorer",
    open: true,
    icon: (
      <>
        <path d="M2 5h10l2 3h16v20H2z" fill="#e8a400" />
        <path d="M2 10h28v17H2z" fill="#ffd969" />
        <path d="M7 18h18v11h-5v-5h-8v5H7z" fill="#3a92dd" />
      </>
    ),
  },
  {
    name: "Notepad",
    open: true,
    icon: (
      <>
        <path d="M27 5l2 21-5 4z" fill="#8a6d45" />
        <path d="M13 3l14 2-5 24-19-5z" fill="#7db8c4" />
        <path d="M13 3l12 2-5 22-14-4z" fill="#c4e4ea" />
        <path d="M9 13l14 3-3 12-15-4z" fill="#4f9cb0" />
      </>
    ),
  },
  {
    name: "Chrome",
    open: true,
    icon: (
      <>
        <circle cx="16" cy="16" r="14" fill="#fbbc05" />
        <path d="M3.900 9A14 14 0 0128.100 9H16a7 7 0 00-6 10.500z" fill="#ea4335" />
        <path d="M3.900 9A14 14 0 0016 30l6-10.500a7 7 0 01-12 0z" fill="#34a853" />
        <circle cx="16" cy="16" r="6.500" fill="#fff" />
        <circle cx="16" cy="16" r="5" fill="#4285f4" />
      </>
    ),
  },
  {
    name: "Brokers",
    open: true,
    icon: (
      <>
        <rect x="3" y="2" width="26" height="28" rx="3" fill="#fff" />
        <path d="M20 4v11l-7 11c-3-3-3-6 0-9z" fill="#d81222" />
        <circle cx="18" cy="23" r="3" fill="#d81222" />
      </>
    ),
  },
  {
    name: "Excel",
    open: true,
    icon: (
      <>
        <path d="M8 2h23v28H8z" fill="#21a366" />
        <path d="M19 2h12v10H19z" fill="#33c481" />
        <path d="M8 21h23v9H8z" fill="#185c37" />
        <path d="M2 9h14v14H2z" fill="#107c41" />
        <path d="M6 12l6 8M12 12l-6 8" stroke="#fff" strokeWidth="2" />
      </>
    ),
  },
  {
    name: "Browser",
    open: true,
    icon: (
      <>
        <circle cx="16" cy="16" r="16" fill="#fff" />
        <circle cx="16" cy="16" r="11" fill="none" stroke="#14143c" strokeWidth="2" />
        <path d="M8 12a9.500 9.500 0 0014 12M24 20A9.500 9.500 0 0010 8" fill="none" stroke="#14143c" strokeWidth="2.500" />
      </>
    ),
  },
];

const Taskbar = () => (
  <footer className="flex h-[50px] items-stretch bg-linear-to-r from-[#474747] from-88% to-[#1b2940] to-92% font-['Open_Sans',sans-serif] text-white">
    <button aria-label="Start" className="flex w-[60px] items-center justify-center bg-[#223a45]">
      <svg viewBox="0 0 20 20" className="h-5 w-5" fill="#fff">
        <path d="M0 3l8-1.200V9.500H0zM9 1.600L20 0v9.500H9zM0 10.500h8v7.700L0 17zM9 10.500h11V20L9 18.400z" />
      </svg>
    </button>
    <label className="flex w-[429px] items-center gap-3 border-y border-[#b8b8b8] bg-[#f1f1f1] pl-4">
      <svg viewBox="0 0 22 22" className="h-[22px] w-[22px]" fill="none" stroke="#222" strokeWidth="1.600">
        <circle cx="13.500" cy="8" r="6.800" />
        <path d="M8.500 13L1 21" />
      </svg>
      <input
        type="search"
        placeholder="Escribe aquí para buscar"
        aria-label="Buscar"
        className="w-[300px] bg-transparent text-lg placeholder:text-[#333]"
      />
    </label>
    <div className="flex flex-1">
      {apps.map((app) => (
        <button
          key={app.name}
          aria-label={app.name}
          className={clsx("relative flex w-[62px] items-center justify-center", app.active && "bg-[#6d6d6d]")}
        >
          <svg viewBox="0 0 32 32" className="h-7 w-7">
            {app.icon}
          </svg>
          {app.open && (
            <span className={clsx("absolute bottom-0 h-[3px] bg-[#76b9ed]", app.active ? "inset-x-0" : "inset-x-1.5")} />
          )}
        </button>
      ))}
    </div>
    <div className="flex items-center gap-[11px] pr-[18px]">
      <svg viewBox="0 0 18 10" className="h-2.5 w-[18px]" fill="none" stroke="#fff" strokeWidth="1.500">
        <path d="M1 9l8-8 8 8" />
      </svg>
      <svg viewBox="0 0 20 18" className="h-[18px] w-5">
        <path d="M0 11a5 5 0 014-6c3-6 11-5 12 0l3 4v5H3z" fill="#d0d0d0" />
        <circle cx="14" cy="12" r="6" fill="#d9232e" />
        <path d="M11 12h6" stroke="#fff" strokeWidth="1.500" />
      </svg>
      <svg viewBox="0 0 20 16" className="h-4 w-5" fill="none" stroke="#fff" strokeWidth="1.200">
        <path d="M6 3.500h12.500v10H4V9M19.500 6v5" />
        <path d="M7.500 5.500h9v6h-9z" fill="#fff" />
        <path d="M1.500 0v3M4.500 0v3M.5 3.500h5V6L4 7.500H2L.5 6z" />
      </svg>
      <svg viewBox="0 0 16 16" className="h-4 w-4" fill="none" stroke="#fff" strokeWidth="1.200">
        <path d="M1 15A14 14 0 0115 1" stroke="#999" />
        <path d="M5 15A10 10 0 0115 5M9 15a6 6 0 016-6" />
        <circle cx="14" cy="14" r="1.200" fill="#fff" />
      </svg>
      <svg viewBox="0 0 20 16" className="h-4 w-5" fill="none" stroke="#fff" strokeWidth="1.200">
        <path d="M1 5h3l4-4v14l-4-4H1zM11 6c1 1 1 3 0 4" />
        <path d="M13 3c3 3 3 7 0 10M16 1c4 4 4 10 0 14" stroke="#999" />
      </svg>
      <div className="ml-1 text-center text-sm leading-[22px]">
        <div>11:58</div>
        <div>12/05/2020</div>
      </div>
      <button aria-label="Notificaciones" className="relative ml-4 h-8 w-8">
        <svg viewBox="0 0 32 32" className="h-8 w-8">
          <path d="M2 3h20v17h-9l-4 4v-4H2z" fill="#fff" />
          <path d="M6 7h12M6 11h12M6 15h8" stroke="#1b2940" strokeWidth="1.500" />
          <circle cx="21" cy="21" r="10" fill="#333" stroke="#888" />
        </svg>
        <span className="absolute top-[12px] left-[17px] text-sm leading-[18px] font-bold">4</span>
      </button>
    </div>
  </footer>
);

export default function App() {
  return (
    <div className="flex min-h-screen flex-col overflow-x-hidden bg-[#e5e6e8] font-['Liberation_Sans',Arial,sans-serif]">
      <main className="relative flex flex-1 flex-col border-x border-b border-[#b9b9b9]">
        <TitleBar />
        <div className="flex gap-2 pt-[9px] pr-1.5 pl-2">
          <div className="relative min-w-0 flex-1 border border-black bg-white">
            <PriceChart />
            <div className="flex h-[19px] items-stretch border-t border-[#e8e8e8] bg-[#e4e4e4]">
              <button aria-label="Scroll left" className="flex w-3 items-center justify-center bg-white">
                <svg viewBox="0 0 5 10" className="h-2.5 w-[5px]">
                  <path d="M5 0L0 5l5 5z" />
                </svg>
              </button>
              <div className="flex flex-1 justify-end">
                <div className="flex w-[482px] gap-1 border border-[#bdbdbd] bg-[#f1f1f1] py-0.5 pl-1">
                  <span className="w-px bg-[#d4d4d4]" />
                  <span className="w-px bg-[#d4d4d4]" />
                </div>
              </div>
              <button aria-label="Scroll right" className="flex w-[14px] items-center justify-center bg-white">
                <svg viewBox="0 0 5 10" className="h-2.5 w-[5px]">
                  <path d="M0 0l5 5-5 5z" />
                </svg>
              </button>
            </div>
            {/* zone buttons float over the chart */}
            <div className="absolute top-1.5 left-1.5 flex h-[26px] text-sm">
              <span className="w-3 bg-black" />
              <button className="w-[149px] border border-black bg-[#e8eae8] pl-[7px] text-left">HYBRID</button>
              <button className="w-[147px] border-y border-black bg-[#e8eae8] pl-[7px] text-left">ZONES</button>
              <button className="w-[122px] border border-[#a0a0a0] bg-[#6d6d6d] pl-2.5 text-left text-white">AUTO MERGE</button>
              <button className="w-[122px] border border-[#a0a0a0] bg-[#6d6d6d] pl-2.5 text-left text-white">AUTO SPLIT</button>
              <button className="w-[122px] border border-[#a0a0a0] bg-[#6d6d6d] pl-2.5 text-left text-white">SPLIT OFF</button>
            </div>
          </div>
          <OrderPanel />
        </div>
        {/* chart tabs */}
        <div className="flex items-start pl-[34px]">
          <span className="h-[29px] w-[132px] bg-[#cfcfcf]" />
          <button aria-label="Chart tab" className="h-[33px] w-[134px] border border-[#444] bg-white" />
          <span className="h-[29px] w-[29px] bg-[#cfcfcf]" />
        </div>
        <IndicatorsDialog />
      </main>
      <Taskbar />
    </div>
  );
}
